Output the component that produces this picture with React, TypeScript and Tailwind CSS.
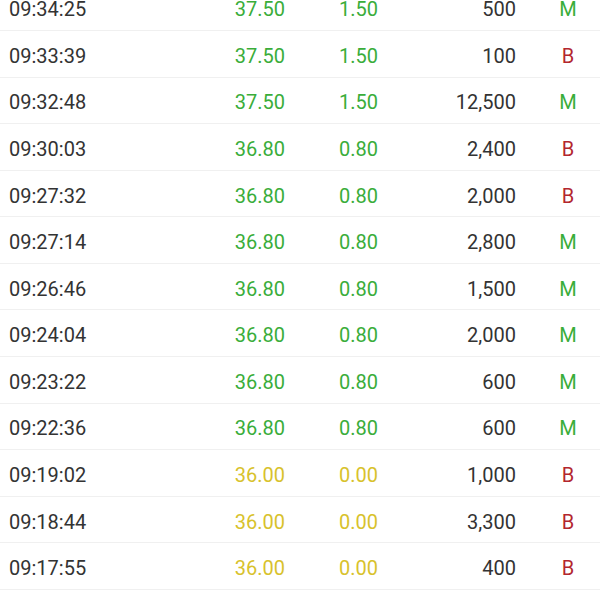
import React from "react";

type Row = { t: string; p: string; c: string; v: string; s: "M" | "B"; tone: "g" | "y" };

const rows: Row[] = [
  { t: "09:34:25", p: "37.50", c: "1.50", v: "500", s: "M", tone: "g" },
  { t: "09:33:39", p: "37.50", c: "1.50", v: "100", s: "B", tone: "g" },
  { t: "09:32:48", p: "37.50", c: "1.50", v: "12,500", s: "M", tone: "g" },
  { t: "09:30:03", p: "36.80", c: "0.80", v: "2,400", s: "B", tone: "g" },
  { t: "09:27:32", p: "36.80", c: "0.80", v: "2,000", s: "B", tone: "g" },
  { t: "09:27:14", p: "36.80", c: "0.80", v: "2,800", s: "M", tone: "g" },
  { t: "09:26:46", p: "36.80", c: "0.80", v: "1,500", s: "M", tone: "g" },
  { t: "09:24:04", p: "36.80", c: "0.80", v: "2,000", s: "M", tone: "g" },
  { t: "09:23:22", p: "36.80", c: "0.80", v: "600", s: "M", tone: "g" },
  { t: "09:22:36", p: "36.80", c: "0.80", v: "600", s: "M", tone: "g" },
  { t: "09:19:02", p: "36.00", c: "0.00", v: "1,000", s: "B", tone: "y" },
  { t: "09:18:44", p: "36.00", c: "0.00", v: "3,300", s: "B", tone: "y" },
  { t: "09:17:55", p: "36.00", c: "0.00", v: "400", s: "B", tone: "y" },
  { t: "09:17:10", p: "36.00", c: "0.00", v: "200", s: "B", tone: "y" },
];

export default function App() {
  return (
    <div
      className="w-[600px] h-[600px] overflow-hidden bg-white text-[20px] text-[#333333]"
      style={{ fontFamily: "Roboto, 'Noto Sans', sans-serif" }}
    >
      <div className="-mt-[15.6px]">
        {rows.map((r, i) => {
          const tone = r.tone === "g" ? "text-[#3aad3a]" : "text-[#d8c22c]";
          return (
            <div
              key={i}
              className="flex items-center h-[46.58px] pl-[9px] pt-[4px] border-b border-[#f0f0f0] leading-none"
            >
              <div className="w-[150px]">{r.t}</div>
              <div className={`w-[126px] text-right ${tone}`}>{r.p}</div>
              <div className={`w-[93px] text-right ${tone}`}>{r.c}</div>
              <div className="w-[138px] text-right">{r.v}</div>
              <div
                className={`ml-[26px] w-[52px] text-center ${
                  r.s === "M" ? "text-[#3aad3a]" : "text-[#b3262e]"
                }`}
              >
                {r.s}
              </div>
            </div>
          );
        })}
      </div>
    </div>
  );
}
